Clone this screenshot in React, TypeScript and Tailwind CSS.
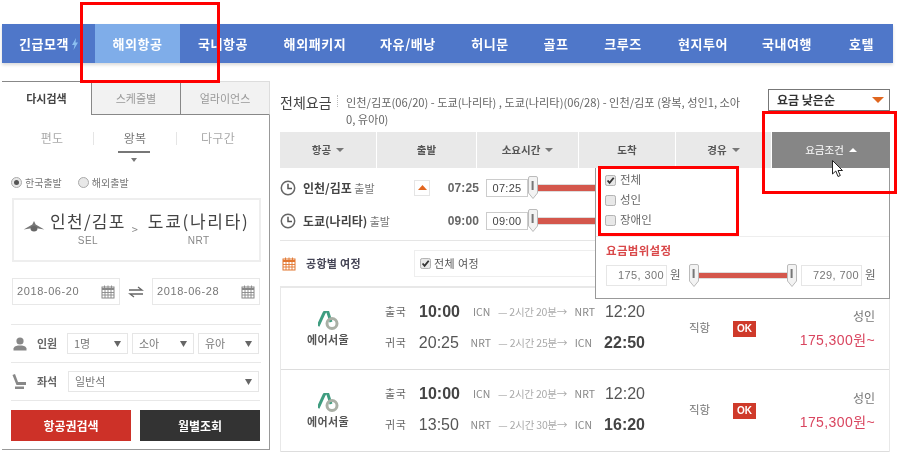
const F = '[font-family:"Noto_Sans_CJK_KR","Liberation_Sans",sans-serif]';

function Tri({ up, c = "#777", w = 4 }: { up?: boolean; c?: string; w?: number }) {
  return (
    <svg width={w * 2} height={w} viewBox="0 0 8 4" className="inline-block ml-[5px] align-middle">
      <path d={up ? "M0 4L4 0L8 4Z" : "M0 0H8L4 4Z"} fill={c} />
    </svg>
  );
}

function Clock() {
  return (
    <svg width="16" height="16" viewBox="0 0 16 16" className="shrink-0">
      <circle cx="8" cy="8" r="6.7" fill="none" stroke="#666" strokeWidth="1.5" />
      <path d="M8 3.8V8.4H12" fill="none" stroke="#555" strokeWidth="1.5" />
    </svg>
  );
}

function Cal({ c = "#888", s = 14 }: { c?: string; s?: number }) {
  return (
    <svg width={s} height={s} viewBox="0 0 14 14" className="shrink-0">
      <rect x="1" y="2" width="12" height="11" fill="none" stroke={c} />
      <path d="M1 3H13V5H1Z" fill={c} />
      <path d="M3.5 0.5V3M7 0.5V3M10.5 0.5V3M1 7.5H13M1 10H13M4 5V13M7 5V13M10 5V13" stroke={c} fill="none" strokeWidth="0.9" />
    </svg>
  );
}

function Check({ on, s = 12 }: { on?: boolean; s?: number }) {
  return (
    <svg width={s} height={s} viewBox="0 0 12 12" className="shrink-0">
      <rect x="0.5" y="0.5" width="11" height="11" rx="2" fill="#e8e8e8" stroke="#aaa" />
      {on && <path d="M2.8 6L5 8.5L9.5 3" fill="none" stroke="#333" strokeWidth="2" />}
    </svg>
  );
}

function Radio({ on }: { on?: boolean }) {
  return (
    <span className="w-[11px] h-[11px] rounded-full border border-[#aaa] bg-[#e8e8e8] flex items-center justify-center shrink-0">
      {on && <span className="w-[5px] h-[5px] rounded-full bg-[#555]" />}
    </span>
  );
}

function Handle() {
  return (
    <svg width="10" height="23" viewBox="0 0 10 23" className="shrink-0 relative z-10">
      <path d="M0.5 2Q0.5 0.5 2 0.5H8Q9.5 0.5 9.5 2V17L5 22.5L0.5 17Z" fill="#f3f3f3" stroke="#bbb" />
      <rect x="3.6" y="5" width="2" height="9" fill="#777" />
    </svg>
  );
}

function Logo() {
  return (
    <svg width="21" height="19" viewBox="0 0 21 19">
      <path d="M0 15L6 2L7.5 0H9.5L13 11" fill="none" stroke="#3f9d80" strokeWidth="3" />
      <circle cx="14" cy="12.5" r="5" fill="none" stroke="#aab0a6" strokeWidth="3" />
    </svg>
  );
}

function Sel({ t, w }: { t: string; w: string }) {
  return (
    <div className={`${w} h-[21px] border border-[#e6e6e6] flex items-center justify-between pl-[6px] pr-[6px] text-[11px] text-[#777]`}>
      <span>{t}</span>
      <svg width="7" height="6" viewBox="0 0 7 6"><path d="M0 0H7L3.5 6Z" fill="#666" /></svg>
    </div>
  );
}

function DateBox({ t }: { t: string }) {
  return (
    <div className="w-[108px] h-[27px] border border-[#e8e8e8] flex items-center justify-between px-[4px] text-[11px] tracking-[0.6px] text-[#777] [font-family:'Liberation_Sans',sans-serif]">
      <span>{t}</span>
      <Cal />
    </div>
  );
}

function TimeRow({ name, t, btn }: { name: string; t: string; btn?: boolean }) {
  return (
    <div className="h-[33px] flex items-center">
      <Clock />
      <div className="w-[119px] pl-[7px] text-[11px] text-[#777] whitespace-nowrap">
        <span className="font-bold text-[#444] text-[12px]">{name}</span> 출발
      </div>
      <div className="w-[16px] h-[16px] -ml-[1px] flex items-center justify-center">
        {btn && (
          <span className="w-[16px] h-[16px] border border-[#e5e5e5] flex items-center justify-center">
            <svg width="9" height="5" viewBox="0 0 9 5"><path d="M0 5L4.5 0L9 5Z" fill="#e2661f" /></svg>
          </span>
        )}
      </div>
      <div className="w-[49px] text-right text-[12px] font-bold text-[#666] [font-family:'Liberation_Sans',sans-serif] tracking-[0.1px]">{t}</div>
      <div className="ml-[7px] w-[42px] h-[18px] border border-[#ccc] text-center text-[11px] leading-[16px] text-[#444] [font-family:'Liberation_Sans',sans-serif] tracking-[0.3px]">{t}</div>
      <Handle />
      <div className="flex-1 h-[6px] border-y border-[#ddd] box-content bg-[#d4574c] -ml-[1px]" />
    </div>
  );
}

function Result({ ret, dur, arr2 }: { ret: string; dur: string; arr2: string }) {
  const line = "flex items-center h-[31px]";
  const route = "w-[122px] mr-[10px] flex justify-between text-[10.5px] text-[#888] whitespace-nowrap";
  return (
    <div className="h-[82px] border-b border-[#ddd] flex items-center">
      <div className="w-[94px] flex flex-col items-center pt-[1px]">
        <Logo />
        <span className="text-[11px] font-bold text-[#555] mt-[1px] tracking-[0.4px]">에어서울</span>
      </div>
      <div className="w-[270px] pl-[10px] -mt-[3px]">
        <div className={line}>
          <span className="w-[34px] text-[11px] text-[#666] tracking-[0.6px]">출국</span>
          <span className="w-[54px] text-[16px] font-bold text-[#444] [font-family:'Liberation_Sans',sans-serif]">10:00</span>
          <div className={route}><span>ICN</span><span className="text-[#aaa] tracking-[-0.2px]">— 2시간 20분→</span><span>NRT</span></div>
          <span className="text-[16px] text-[#555] [font-family:'Liberation_Sans',sans-serif]">12:20</span>
        </div>
        <div className={line}>
          <span className="w-[34px] text-[11px] text-[#666] tracking-[0.6px]">귀국</span>
          <span className="w-[54px] text-[16px] text-[#555] [font-family:'Liberation_Sans',sans-serif]">{ret}</span>
          <div className={`${route} -ml-[2px] !mr-[12px]`}><span>NRT</span><span className="text-[#aaa] tracking-[-0.2px]">— {dur}→</span><span>ICN</span></div>
          <span className="text-[16px] font-bold text-[#444] [font-family:'Liberation_Sans',sans-serif]">{arr2}</span>
        </div>
      </div>
      <span className="ml-[44px] w-[44px] text-[11.5px] text-[#777] -mt-[1px]">직항</span>
      <span className="w-[23px] h-[16px] bg-[#cf3a2a] text-white text-[10px] font-bold flex items-center justify-center [font-family:'Liberation_Sans',sans-serif]">OK</span>
      <div className="flex-1 pr-[14px] text-right -mt-[2px]">
        <div className="text-[12px] text-[#777] leading-[24px]">성인</div>
        <div className="text-[14px] text-[#d9455f] leading-[24px] tracking-[0.4px] whitespace-nowrap [font-family:'Liberation_Sans','Noto_Sans_CJK_KR',sans-serif]">175,300원~</div>
      </div>
    </div>
  );
}

const nav: [string, string][] = [
  ["긴급모객", "w-[93px]"], ["해외항공", "w-[85px] bg-[#7fade9]"], ["국내항공", "w-[86px]"], ["해외패키지", "w-[98px]"],
  ["자유/배낭", "w-[88px]"], ["허니문", "w-[76px]"], ["골프", "w-[56px]"], ["크루즈", "w-[78px]"],
  ["현지투어", "w-[82px]"], ["국내여행", "w-[86px]"], ["호텔", "w-[63px]"],
];

const heads: [string, string, boolean][] = [
  ["항공", "w-[96px]", true], ["출발", "w-[99px]", false], ["소요시간", "w-[101px]", true],
  ["도착", "w-[96px]", false], ["경유", "w-[95px]", true],
];

export default function App() {
  return (
    <div className={`relative w-[900px] h-[456px] overflow-hidden bg-white pt-[24px] blur-[0.3px] ${F}`}>
      <nav className="ml-[2px] w-[891px] h-[39px] flex bg-[#4f77c9] shadow-[0_2px_3px_rgba(0,0,0,0.15)] text-white text-[13px] font-bold tracking-[0.6px]">
        {nav.map(([t, c], i) => (
          <div key={t} className={`${c} flex items-center justify-center`}>
            {t}
            {i === 0 && (
              <svg width="6" height="12" viewBox="0 0 6 12" className="ml-[3px]"><path d="M4 0L0 7H2.5L1.5 12L6 4.5H3.5Z" fill="#8cc0f0" /></svg>
            )}
          </div>
        ))}
      </nav>

      <div className="flex mt-[18px]">
        <aside className="ml-[2px] w-[268px] h-[369px] border-r border-b border-[#999] shrink-0">
          <div className="flex h-[34px] text-[11px] -mr-[1px]">
            <div className="w-[89px] border-t border-[#888] flex items-center justify-center font-bold text-[#444]">다시검색</div>
            <div className="w-[90px] border border-[#888] border-t-[#ddd] bg-[#f2f2f2] flex items-center justify-center text-[#999]">스케줄별</div>
            <div className="flex-1 border-b border-t border-r border-b-[#888] border-t-[#ddd] border-r-[#ddd] bg-[#f2f2f2] flex items-center justify-center text-[#999]">얼라이언스</div>
          </div>

          <div className="flex h-[36px] pt-[11px] pl-[9px] text-[12px] text-[#aaa] tracking-[0.3px]">
            <div className="w-[82px] flex items-center justify-center h-[24px]">편도</div>
            <div className="w-[1px] h-[13px] mt-[6px] bg-[#e5e5e5]" />
            <div className="w-[82px] flex items-center justify-center h-[24px] text-[#777]">왕복</div>
            <div className="w-[1px] h-[13px] mt-[6px] bg-[#e5e5e5]" />
            <div className="w-[82px] flex items-center justify-center h-[24px]">다구간</div>
          </div>
          <div className="pl-[116px] h-[15px]">
            <div className="w-[32px] h-[2px] bg-[#777]" />
            <svg width="6" height="4" viewBox="0 0 6 4" className="ml-[13px] mt-[5px] block"><path d="M0 0H6L3 4Z" fill="#777" /></svg>
          </div>
          <div className="ml-[9px] h-[32px] flex items-center gap-[3px] text-[10px] text-[#777]">
            <Radio on /><span>한국출발</span><span className="w-[10px]" /><Radio /><span>해외출발</span>
          </div>

          <div className="ml-[10px] w-[249px] h-[64px] border-2 border-[#eee] flex items-start pl-[8px] pt-[9px]">
            <svg width="24" height="12" viewBox="0 0 24 14" className="mt-[12px] shrink-0">
              <path d="M12 0L14 4L24 10L15 8.5L12 11L9 8.5L0 10L10 4Z" fill="#777" />
              <ellipse cx="12" cy="9" rx="4" ry="3.2" fill="#666" />
            </svg>
            <div className="flex flex-col items-center ml-[4px]">
              <span className="text-[17px] leading-[24px] text-[#444] tracking-[1.3px] whitespace-nowrap">인천/김포</span>
              <span className="text-[10px] leading-[14px] text-[#888] mt-[1px] [font-family:'Liberation_Sans',sans-serif] tracking-[0.4px]">SEL</span>
            </div>
            <span className="text-[11px] text-[#888] mt-[12px] ml-[6px] mr-[10px]">&gt;</span>
            <div className="flex flex-col items-center">
              <span className="text-[17px] leading-[24px] text-[#444] tracking-[1.7px] whitespace-nowrap">도쿄(나리타)</span>
              <span className="text-[10px] leading-[14px] text-[#888] mt-[1px] [font-family:'Liberation_Sans',sans-serif] tracking-[0.4px]">NRT</span>
            </div>
          </div>

          <div className="ml-[10px] mt-[16px] w-[248px] flex items-center justify-between">
            <DateBox t="2018-06-20" />
            <svg width="16" height="12" viewBox="0 0 16 12"><path d="M1 4H14L10 1M15 8H2L6 11" fill="none" stroke="#666" strokeWidth="1.3" /></svg>
            <DateBox t="2018-06-28" />
          </div>

          <div className="ml-[9px] w-[250px] mt-[19px] border-t border-[#e8e8e8] h-[38px] flex items-center">
            <svg width="14" height="14" viewBox="0 0 14 14" className="ml-[2px] shrink-0">
              <circle cx="7" cy="4" r="3.6" fill="#888" /><path d="M0.5 13.5V11.5Q1 9 5 8.5H9Q13 9 13.5 11.5V13.5Z" fill="#888" />
            </svg>
            <span className="ml-[10px] w-[30px] text-[11px] font-bold text-[#666]">인원</span>
            <div className="flex gap-[4px]">
              <Sel t="1명" w="w-[61px]" /><Sel t="소아" w="w-[62px]" /><Sel t="유아" w="w-[61px]" />
            </div>
          </div>
          <div className="ml-[9px] w-[250px] border-t border-[#e8e8e8] h-[38px] flex items-center">
            <svg width="15" height="15" viewBox="0 0 15 15" className="ml-[1px] shrink-0">
              <path d="M0.5 1L3 0L6 8H14V11H4.5Z" fill="#888" /><path d="M3 12.5H12V15H3Z" fill="#888" />
            </svg>
            <span className="ml-[10px] w-[31px] text-[11px] font-bold text-[#666]">좌석</span>
            <Sel t="일반석" w="w-[191px]" />
          </div>
          <div className="ml-[9px] w-[249px] border-t border-[#e8e8e8] pt-[9px] flex justify-between text-white text-[12px] font-bold">
            <div className="w-[120px] h-[31px] bg-[#cd3128] flex items-center justify-center">항공권검색</div>
            <div className="w-[120px] h-[31px] bg-[#333333] flex items-center justify-center">월별조회</div>
          </div>
        </aside>

        <main className="relative ml-[10px] w-[610px] shrink-0">
          <div className="h-[51px] flex items-start">
            <div className="w-[57px] pt-[11px] text-[14px] leading-[20px] text-[#444] whitespace-nowrap">전체요금</div>
            <div className="w-[9px] mt-[14px] h-[12px] border-l border-dotted border-[#bbb]" />
            <div className="w-[402px] pt-[13px] text-[11.2px] leading-[17px] text-[#666]">
              인천/김포(06/20) - 도쿄(나리타) , 도쿄(나리타)(06/28) - 인천/김포 (왕복, 성인1, 소아0, 유아0)
            </div>
            <div className="ml-[20px] mt-[8px] w-[122px] h-[22px] border border-[#777] flex items-center justify-between pl-[8px] pr-[5px] text-[12px] font-bold text-[#333]">
              요금 낮은순
              <svg width="12" height="6" viewBox="0 0 12 6"><path d="M0 0H12L6 6Z" fill="#e0661f" /></svg>
            </div>
          </div>

          <div className="flex h-[36px] gap-[1px] text-[10.5px] font-bold text-[#555]">
            {heads.map(([t, w, tri]) => (
              <div key={t} className={`${w} bg-[#e9e9e9] flex items-center justify-center`}>
                {t}{tri && <Tri />}
              </div>
            ))}
            <div className="flex-1 bg-[#868686] text-white font-normal flex items-center justify-center">
              요금조건<Tri up c="#fff" />
            </div>
          </div>

          <div className="h-[73px] pt-[3px] border-b border-[#e5e5e5]">
            <TimeRow name="인천/김포" t="07:25" btn />
            <TimeRow name="도쿄(나리타)" t="09:00" />
          </div>

          <div className="h-[45px] flex items-center">
            <span className="ml-[2px]"><Cal c="#e2762f" s={14} /></span>
            <span className="ml-[10px] w-[108px] text-[11px] font-bold text-[#445] tracking-[0.3px]">공항별 여정</span>
            <div className="flex-1 h-[27px] border border-[#eee] flex items-center pl-[5px] gap-[3px] text-[11px] text-[#555] tracking-[0.4px]">
              <Check on s={11} />전체 여정
            </div>
          </div>

          <div className="border border-[#e8e8e8] border-t-2 border-b-0">
            <Result ret="20:25" dur="2시간 25분" arr2="22:50" />
            <Result ret="13:50" dur="2시간 30분" arr2="16:20" />
          </div>

          <div className="absolute left-[315px] top-[87px] w-[295px] h-[131px] bg-white border border-[#999] border-t-0 text-[11.5px] text-[#666]">
            <div className="h-[69px] pl-[9px] pt-[2px] border-b border-[#eee]">
              <div className="h-[20px] flex items-center gap-[4px]"><Check on s={11} />전체</div>
              <div className="h-[20px] flex items-center gap-[4px]"><Check s={11} />성인</div>
              <div className="h-[20px] flex items-center gap-[4px]"><Check s={11} />장애인</div>
            </div>
            <div className="pl-[10px] pt-[5px] text-[11.5px] font-bold text-[#d9484a] tracking-[0.3px]">요금범위설정</div>
            <div className="pl-[10px] mt-[5px] flex items-center h-[23px]">
              <div className="w-[61px] h-[21px] border border-[#e6e6e6] text-right pr-[2px] text-[11px] leading-[19px] tracking-[0.4px] text-[#777] [font-family:'Liberation_Sans',sans-serif]">175, 300</div>
              <span className="ml-[3px] w-[19px] -mt-[3px]">원</span>
              <Handle />
              <div className="w-[88px] h-[5px] box-content border-y border-[#ddd] bg-[#d4574c]" />
              <Handle />
              <div className="ml-[4px] w-[61px] h-[21px] border border-[#e6e6e6] text-right pr-[2px] text-[11px] leading-[19px] tracking-[0.4px] text-[#777] [font-family:'Liberation_Sans',sans-serif]">729, 700</div>
              <span className="ml-[3px] -mt-[3px]">원</span>
            </div>
          </div>
        </main>
      </div>

      {/* red annotation boxes */}
      <div className="absolute left-[80px] top-[2px] w-[140px] h-[81px] border-[3px] border-[#f00]" />
      <div className="absolute left-[762px] top-[111px] w-[135px] h-[83px] border-[3px] border-[#f00]" />
      <div className="absolute left-[598px] top-[166px] w-[141px] h-[70px] border-[3px] border-[#f00]" />

      {/* cursor */}
      <svg width="12" height="18" viewBox="0 0 12 18" className="absolute left-[832px] top-[160px]">
        <path d="M0.5 0.5V14L3.8 11L6 16.5L8.3 15.5L6 10.5H10.5Z" fill="#fff" stroke="#222" />
      </svg>
    </div>
  );
}
